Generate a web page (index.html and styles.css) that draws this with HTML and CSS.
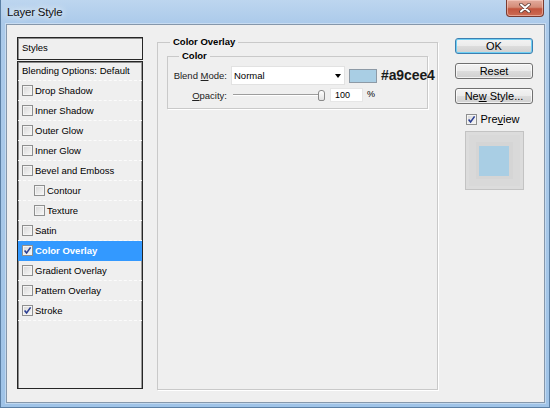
FILE: index.html
```html
<!DOCTYPE html>
<html>
<head>
<meta charset="utf-8">
<title>Layer Style</title>
<link rel="stylesheet" href="styles.css">
</head>
<body>
<div class="window">
  <div class="titlebar">
    <span class="title">Layer Style</span>
    <div class="close">
      <svg width="12" height="10" viewBox="0 0 12 10"><path d="M2 1.5 L10 8.5 M10 1.5 L2 8.5" stroke="#5a3a34" stroke-width="3.6" stroke-linecap="round" fill="none"/><path d="M2 1.5 L10 8.5 M10 1.5 L2 8.5" stroke="#ffffff" stroke-width="2" stroke-linecap="round" fill="none"/></svg>
    </div>
  </div>
  <div class="client">
    <div class="styles-panel">
      <div class="styles-head">Styles</div>
      <ul class="style-list">
        <li class="row first">Blending Options: Default</li>
        <li class="row"><span class="cb"></span>Drop Shadow</li>
        <li class="row"><span class="cb"></span>Inner Shadow</li>
        <li class="row"><span class="cb"></span>Outer Glow</li>
        <li class="row"><span class="cb"></span>Inner Glow</li>
        <li class="row"><span class="cb"></span>Bevel and Emboss</li>
        <li class="row sub"><span class="cb"></span>Contour</li>
        <li class="row sub"><span class="cb"></span>Texture</li>
        <li class="row"><span class="cb"></span>Satin</li>
        <li class="row selected"><span class="cb"><svg width="9" height="9" viewBox="0 0 9 9"><path d="M1.6 4.4 L3.6 7 L7.6 1.4" stroke="#2b3f93" stroke-width="1.6" fill="none"/></svg></span>Color Overlay</li>
        <li class="row"><span class="cb"></span>Gradient Overlay</li>
        <li class="row"><span class="cb"></span>Pattern Overlay</li>
        <li class="row"><span class="cb"><svg width="9" height="9" viewBox="0 0 9 9"><path d="M1.6 4.4 L3.6 7 L7.6 1.4" stroke="#2b3f93" stroke-width="1.6" fill="none"/></svg></span>Stroke</li>
      </ul>
    </div>

    <fieldset class="group outer">
      <legend>Color Overlay</legend>
      <fieldset class="group inner">
        <legend>Color</legend>
        <div class="field blend">
          <span class="lbl">Blend <u>M</u>ode:</span>
          <div class="select"><span class="sel-text">Normal</span><span class="arrow"></span></div>
          <div class="swatch"></div>
          <span class="hex">#a9cee4</span>
        </div>
        <div class="field opacity">
          <span class="lbl"><u>O</u>pacity:</span>
          <div class="slider"><div class="track"></div><div class="thumb"></div></div>
          <div class="num">100</div>
          <span class="pct">%</span>
        </div>
      </fieldset>
    </fieldset>

    <div class="buttons">
      <div class="btn default">OK</div>
      <div class="btn">Reset</div>
      <div class="btn">Ne<u>w</u> Style...</div>
      <div class="preview-check"><span class="cb"><svg width="9" height="9" viewBox="0 0 9 9"><path d="M1.6 4.4 L3.6 7 L7.6 1.4" stroke="#2b3f93" stroke-width="1.6" fill="none"/></svg></span>Pre<u>v</u>iew</div>
      <div class="preview-box"><div class="preview-swatch"></div></div>
    </div>
  </div>
</div>
</body>
</html>
```
FILE: styles.css
```css
html, body {
  margin: 0;
  padding: 0;
}
body {
  background: #a9c8e7;
  font-family: "Liberation Sans", Arial, sans-serif;
  font-size: 9.5px;
  color: #000;
}
.window {
  width: 550px;
  height: 408px;
  box-sizing: border-box;
  display: flex;
  flex-direction: column;
  border: 1px solid #5b7fa4;
  border-top: none;
  background: linear-gradient(180deg, #bdd6ef 0px, #abcaea 24px, #a6c7e8 60%, #9fc3e7 100%);
}
.titlebar {
  height: 24px;
  flex: none;
  display: flex;
  align-items: flex-start;
  padding-left: 6px;
}
.title {
  font-size: 11.5px;
  line-height: 25px;
  letter-spacing: -0.2px;
  color: #111;
  text-shadow: 0 0 6px #fff, 0 0 10px #eaf3fb;
}
.close {
  margin-left: auto;
  margin-right: 5px;
  width: 38px;
  height: 17px;
  box-sizing: border-box;
  border: 1px solid #7a3b30;
  border-top: none;
  border-radius: 0 0 4px 4px;
  background: linear-gradient(180deg, #e3ab9d 0%, #d48c78 45%, #c2553e 55%, #cc6c54 100%);
  display: flex;
  align-items: center;
  justify-content: center;
  box-shadow: inset 0 0 0 1px rgba(255, 220, 210, 0.5);
}
.client {
  flex: 1;
  margin: 0 4px 4px 5px;
  border: 1px solid #8597ab;
  background: #efefef;
  display: flex;
  padding: 12px 0 13px 10px;
  box-shadow: 0 0 0 1px rgba(255, 255, 255, 0.35);
}

/* styles list */
.styles-panel {
  width: 126px;
  display: flex;
  flex-direction: column;
  flex: none;
}
.styles-head {
  height: 23px;
  box-sizing: border-box;
  border: 1px solid #262626;
  box-shadow: inset 1px 1px 0 #8a8a8a;
  padding-left: 4px;
  line-height: 20px;
}
.style-list {
  list-style: none;
  margin: 1px 0 0 0;
  padding: 0;
  flex: 1;
  border: 1px solid #262626;
  box-shadow: inset 1px 1px 0 #8a8a8a, inset -1px 0 0 #9a9a9a;
}
.row {
  height: 19px;
  line-height: 19px;
  border-bottom: 1px dashed #fbfbfb;
  padding-left: 4px;
  display: flex;
  align-items: center;
  white-space: nowrap;
}
.row.first {
  height: 18px;
  line-height: 18px;
}
.row.sub {
  padding-left: 16px;
}
.row.selected {
  background: #3399ff;
  color: #fff;
  font-weight: bold;
  border-bottom-color: #3399ff;
}
.cb {
  width: 11px;
  height: 11px;
  box-sizing: border-box;
  border: 1px solid #8e8f8f;
  background: linear-gradient(135deg, #d6d6d6 0%, #e8e8e8 50%, #f8f8f8 100%);
  box-shadow: inset 0 0 0 1px #f4f4f4;
  margin-right: 2px;
  flex: none;
  display: flex;
  align-items: center;
  justify-content: center;
}
.cb svg {
  display: block;
}

/* group boxes */
.group {
  margin: 0;
  min-width: 0;
  border: 1px solid #c9c9c9;
  box-shadow: 1px 1px 0 #ffffff;
}
.group legend {
  font-weight: bold;
  line-height: 12px;
  padding: 0 3px;
}
.outer {
  width: 281px;
  box-sizing: border-box;
  margin: -1px 0 -1px 14px;
  padding: 0 9px;
  flex: none;
}
.outer > legend {
  margin-left: 3px;
}
.inner {
  margin-top: 2px;
  padding: 0 0 6px 0;
}
.inner > legend {
  margin-left: 11px;
}
.field {
  display: flex;
  align-items: center;
  white-space: nowrap;
}
.field > * {
  flex: none;
}
.lbl {
  width: 59px;
  text-align: right;
  color: #222;
}
.blend {
  margin-top: 4px;
  height: 19px;
}
.select {
  margin-left: 4px;
  width: 114px;
  height: 19px;
  box-sizing: border-box;
  background: #fff;
  border: 1px solid #e2e2e2;
  display: flex;
  align-items: center;
  padding: 0 3px 0 2px;
  font-size: 9.5px;
}
.sel-text {
  flex: 1;
}
.arrow {
  width: 0;
  height: 0;
  border-left: 3.5px solid transparent;
  border-right: 3.5px solid transparent;
  border-top: 4px solid #000;
  margin-top: 1px;
}
.swatch {
  margin-left: 4px;
  width: 28px;
  height: 14px;
  box-sizing: border-box;
  border: 1px solid #8d9aa6;
  background: #a9cee4;
}
.hex {
  margin-left: 4px;
  font-size: 14px;
  font-weight: bold;
  color: #1a1a1a;
  line-height: 19px;
  letter-spacing: -0.1px;
}
.opacity {
  margin-top: 3px;
  height: 14px;
}
.slider {
  margin-left: 4px;
  width: 95px;
  height: 14px;
  display: flex;
  align-items: center;
}
.track {
  flex: 1;
  margin-left: 2px;
  height: 1px;
  background: #9d9d9d;
  border-bottom: 1px solid #ffffff;
}
.thumb {
  width: 7px;
  height: 11px;
  box-sizing: border-box;
  margin-left: -2px;
  margin-right: 1px;
  border: 1px solid #8a8a8a;
  border-radius: 3px 3px 2px 2px;
  background: linear-gradient(180deg, #ffffff, #e2e2e2);
}
.num {
  margin-left: 4px;
  width: 33px;
  height: 14px;
  box-sizing: border-box;
  background: #fff;
  border: 1px solid #e6e6e6;
  padding-left: 4px;
  font-size: 9px;
  line-height: 12px;
}
.pct {
  margin-left: 4px;
  font-size: 9px;
  margin-top: -3px;
}

/* buttons column */
.buttons {
  margin-left: 17px;
  margin-top: 1px;
  width: 78px;
  flex: none;
  display: flex;
  flex-direction: column;
  align-items: center;
}
.btn {
  width: 78px;
  height: 16px;
  box-sizing: border-box;
  border: 1px solid #707070;
  border-radius: 3px;
  background: linear-gradient(180deg, #f3f3f3 0%, #ebebeb 50%, #dddddd 50%, #d0d0d0 100%);
  box-shadow: inset 0 0 0 1px rgba(255, 255, 255, 0.7);
  font-size: 11px;
  line-height: 14px;
  text-align: center;
  margin-bottom: 9px;
  white-space: nowrap;
}
.btn.default {
  border-color: #3c7fb1;
  box-shadow: inset 0 0 0 1px #6fd0f4;
}
.preview-check {
  display: flex;
  align-items: center;
  font-size: 11px;
  line-height: 12px;
  height: 12px;
  margin-left: -2px;
}
.preview-check .cb {
  margin-right: 3px;
}
.preview-box {
  margin-top: 6px;
  width: 59px;
  height: 59px;
  box-sizing: border-box;
  border: 1px solid #c3c3c3;
  background: #d5d5d5;
  box-shadow: inset 0 0 0 3px #dcdcdc, inset 0 0 0 10px #d9d9d9;
  display: flex;
  align-items: center;
  justify-content: center;
}
.preview-swatch {
  width: 30px;
  height: 30px;
  background: #a9cee4;
}
```
